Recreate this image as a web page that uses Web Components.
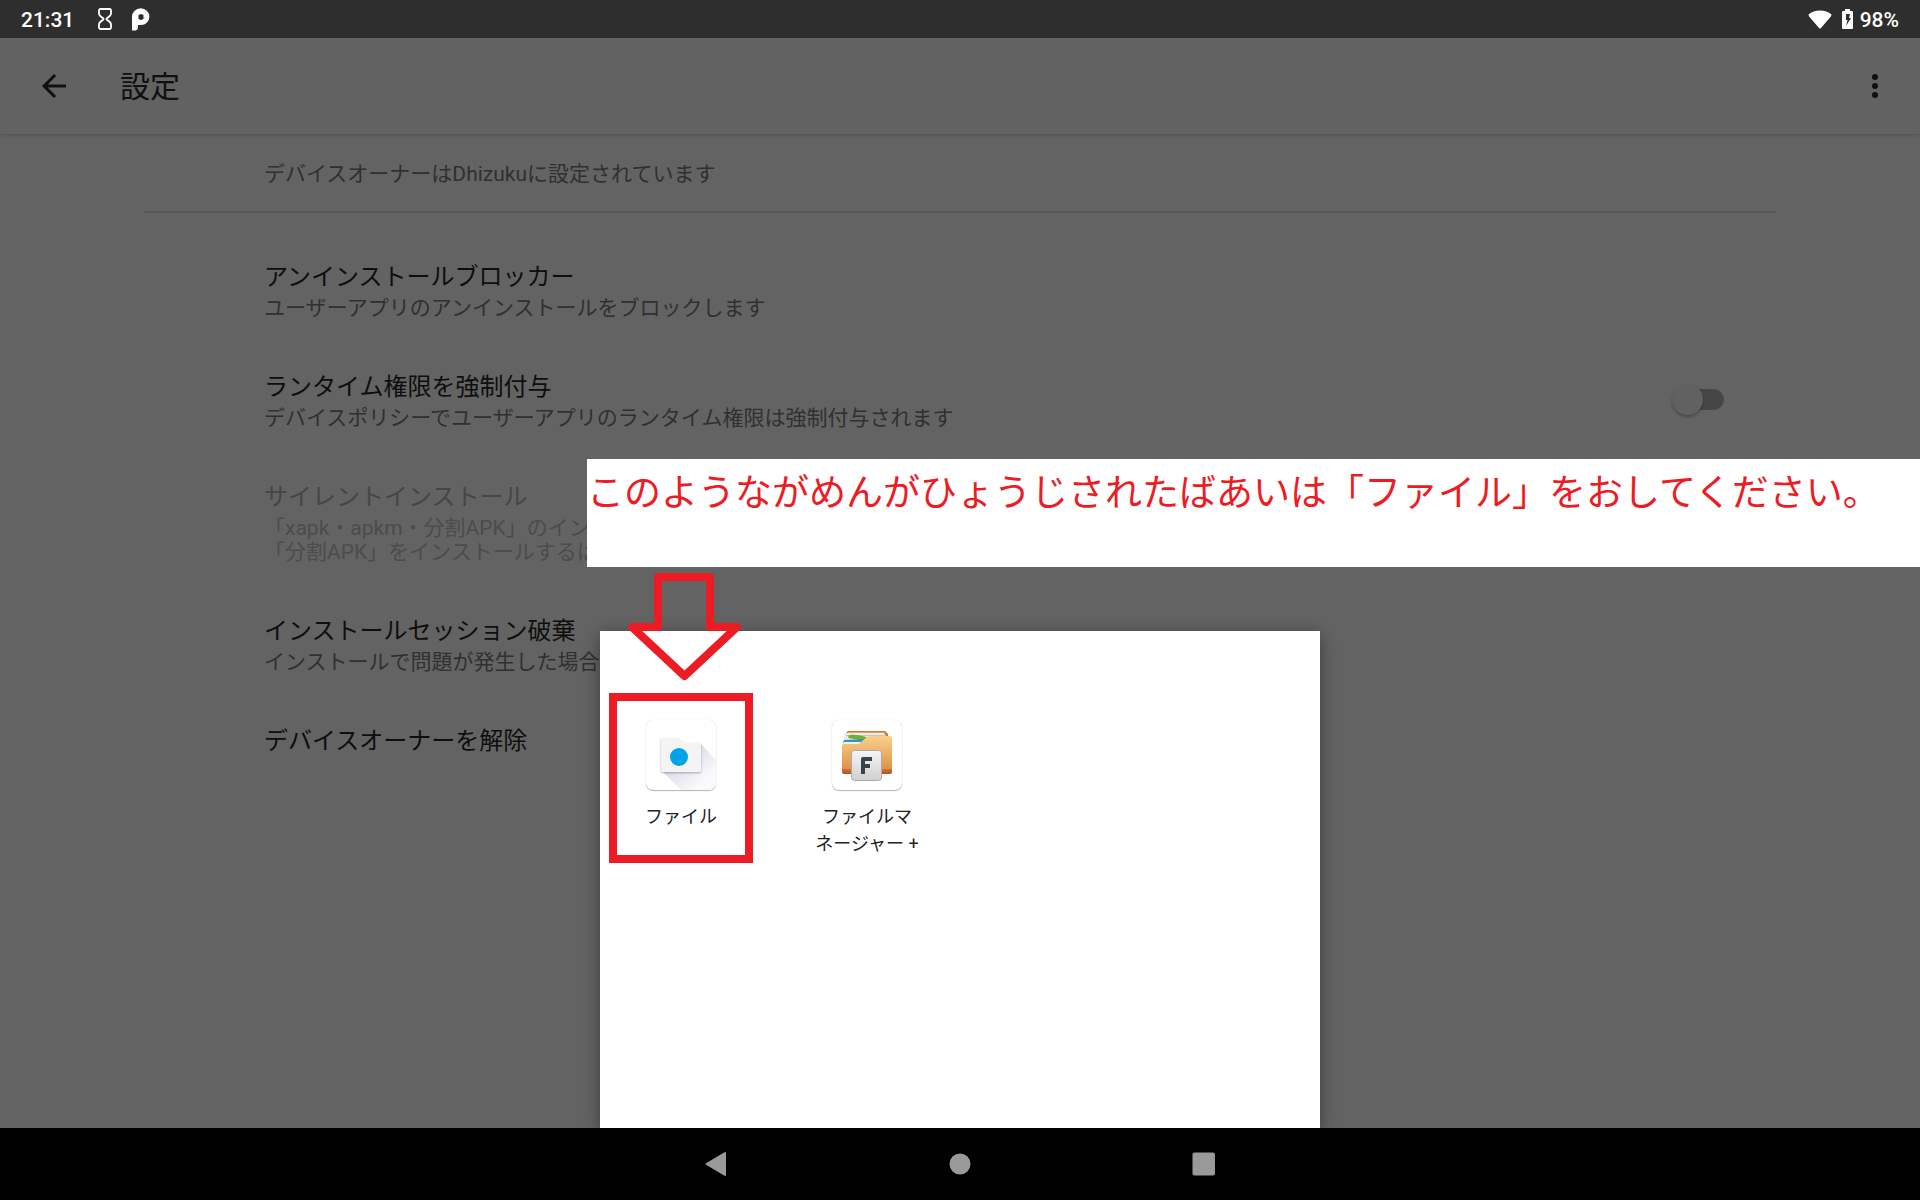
<!DOCTYPE html>
<html lang="ja">
<head>
<meta charset="utf-8">
<meta name="viewport" content="width=device-width, initial-scale=1">
<title>設定</title>
<style>
  html, body { margin: 0; min-height: 100%; }
  body { background: #636363; font-family: Roboto, "Noto Sans CJK JP", sans-serif; }
</style>
</head>
<body>
<device-screen></device-screen>
<script>
const define = (name, html) => {
  const tpl = document.createElement('template');
  tpl.innerHTML = '<style>*{box-sizing:border-box}button{appearance:none;border:0;background:none;padding:0;margin:0;font:inherit;color:inherit;cursor:pointer}svg{display:block}</style>' + html;
  customElements.define(name, class extends HTMLElement {
    constructor() {
      super();
      this.attachShadow({ mode: 'open' }).append(tpl.content.cloneNode(true));
    }
  });
};

define('status-bar', `
<style>
:host { display: flex; justify-content: space-between; align-items: center; height: 38px; padding: 0 21px; background: #2e2e2e; color: #fff; font-size: 21px; font-weight: 500; line-height: 36px; }
div { display: flex; align-items: center; }
time, span { padding-top: 2px; }
.left svg:first-of-type { margin-left: 24px; }
.left svg:last-of-type { margin-left: 20px; }
.right svg:first-of-type { margin-right: 10px; }
.right svg:last-of-type { margin-right: 7px; }
</style>
<div class="left"><time>21:31</time>
<svg width="14" height="22" viewBox="0 0 14 22" fill="none" stroke="#fff" stroke-width="1.8" stroke-linejoin="round"><path d="M2 1H12L13 2V5.500Q13 7 11.500 8.200L8.600 10.500V11.500L11.500 13.800Q13 15 13 16.500V20L12 21H2L1 20V16.500Q1 15 2.500 13.800L5.400 11.500V10.500L2.500 8.200Q1 7 1 5.500V2Z"/></svg>
<svg width="18" height="23" viewBox="0 0 18 23"><path fill="#fff" fill-rule="evenodd" d="M0 22V9A8.700 8.700 0 0 1 17.400 9A8.300 8.300 0 0 1 9 17H6V19Q6 22 3.500 22.500H1Q0 22.500 0 22ZM9 6L6.500 7V11L9 12L11.500 11V7Z"/></svg></div>
<div class="right">
<svg width="24" height="19" viewBox="0 0 24 19"><path fill="#fff" d="M.5 4.500Q5 .5 12 .5T23.500 4.500Q23.500 6 22 7.500L13 18Q12 19 11 18L2 7.500Q.5 6 .5 4.500Z"/></svg>
<svg width="11" height="20" viewBox="0 0 11 20"><path fill="#fff" fill-rule="evenodd" d="M3 0H8V2H10Q11 2 11 3V19Q11 20 10 20H1Q0 20 0 19V3Q0 2 1 2H3ZM4 5V11H5.500L4 17L9 9H7L8 5Z"/></svg>
<span>98%</span></div>`);

define('app-bar', `
<style>
:host { display: flex; align-items: center; height: 96px; padding: 0 27px 0 36px; background: #626262; color: #101010; box-shadow: 0 1px 3px rgba(0,0,0,.2); position: relative; }
h1 { flex: 1; margin: 0 0 0 48px; padding-top: 2px; font-size: 30px; line-height: 44px; font-weight: 400; }
</style>
<button aria-label="戻る"><svg width="36" height="36" viewBox="0 0 24 24"><path fill="#101010" d="M20 11H7.830l5.590-5.590L12 4l-8 8 8 8 1.410-1.410L7.830 13H20v-2z"/></svg></button>
<h1><slot></slot></h1>
<button aria-label="その他"><svg width="36" height="36" viewBox="0 0 24 24" fill="#101010"><circle cx="12" cy="6" r="2"/><circle cx="12" cy="12" r="2"/><circle cx="12" cy="18" r="2"/></svg></button>`);

define('owner-note', `
<style>
:host { display: block; margin: 0 144px; padding: 28px 120px 25px; border-bottom: 2px solid #565656; color: #303030; font-size: 21px; line-height: 24px; }
</style><slot></slot>`);

define('setting-row', `
<style>
:host { display: flex; align-items: center; justify-content: space-between; padding: 25px 196px 23px 264px; color: #0e0e0e; --sub: #303030; }
:host([disabled]) { color: #464646; --sub: #4c4c4c; }
h2 { margin: 0; font-size: 24px; line-height: 38px; font-weight: 400; }
p { margin: 0; font-size: 21px; line-height: 24px; color: var(--sub); }
</style>
<div><h2><slot></slot></h2><p><slot name="summary"></slot></p></div>
<slot name="control"></slot>`);

define('toggle-switch', `
<style>
:host { display: block; }
label { display: flex; align-items: center; width: 52px; height: 32px; }
input { appearance: none; display: flex; align-items: center; width: 52px; height: 21px; margin: 0; background: linear-gradient(#464646, #464646) right center / 36px 21px no-repeat; border-radius: 0 11px 11px 0; }
input::before { content: ""; width: 31px; height: 31px; flex: none; border-radius: 50%; background: #616161; box-shadow: 0 2px 3px rgba(0,0,0,.25); }
</style>
<label><input type="checkbox" role="switch" aria-label="ランタイム権限を強制付与"></label>`);

define('app-tile', `
<style>
:host { display: block; }
button { display: flex; flex-direction: column; align-items: center; gap: 13px; width: 106px; color: #222; font-size: 18px; line-height: 27px; }
.tile { display: block; width: 70px; height: 70px; border-radius: 7px; background: #fff; box-shadow: 0 1px 1px rgba(0,0,0,.28), 0 0 1px rgba(0,0,0,.18); overflow: hidden; }
</style>
<button><span class="tile"><slot name="icon"></slot></span><span><slot></slot></span></button>`);

define('files-icon', `
<style>:host { display: block; }</style>
<svg width="70" height="70" viewBox="0 0 70 70">
<defs><linearGradient id="s" x1="0" y1="0" x2="1" y2="1"><stop offset=".35" stop-color="#dcdcea"/><stop offset=".8" stop-color="#fafafd"/></linearGradient>
<filter id="b" x="-20%" y="-20%" width="140%" height="150%"><feDropShadow dx="0" dy="1" stdDeviation="1" flood-opacity=".3"/></filter></defs>
<path fill="url(#s)" d="M15 50L35 70H70V40L55 24Z"/>
<path filter="url(#b)" fill="#f4f4f4" d="M15 20Q15 18 17 18H31Q33 18 35 20L38 23H53Q55 23 55 25V50Q55 52 53 52H17Q15 52 15 50Z"/>
<circle cx="33" cy="37" r="9" fill="#00a2e8"/></svg>`);

define('manager-icon', `
<style>:host { display: block; }</style>
<svg width="70" height="70" viewBox="0 0 70 70">
<defs><linearGradient id="f" x1="0" y1="0" x2="0" y2="1"><stop offset="0" stop-color="#fbd08c"/><stop offset="1" stop-color="#dc9146"/></linearGradient>
<linearGradient id="c" x1="0" y1="0" x2="0" y2="1"><stop offset="0" stop-color="#f5f5f5"/><stop offset="1" stop-color="#cfcfcf"/></linearGradient>
<linearGradient id="d" x1="0" y1="0" x2="0" y2="1"><stop offset="0" stop-color="#cf7636"/><stop offset="1" stop-color="#b4501c"/></linearGradient></defs>
<path fill="#c97a32" d="M14 13L16 11H53L56 14V30H14Z"/><path fill="#eda24b" d="M16 12H53V13H16Z"/>
<path fill="#e9ecea" d="M12 14Q12 13 14 13H52L54 16V34H11Z"/><path fill="#c0c8c9" d="M14 15H53V16H14Z"/>
<path fill="#74ad36" d="M17 15Q27 14 37 18L34 21L16 18Z"/>
<path fill="#3098b8" d="M12 20L33 19L29 23H11Z"/><path fill="#edf2f0" d="M12 22H30L27 25H11Z"/>
<path fill="url(#f)" d="M10 26Q10 24 12 24H26Q28 24 29 22L35 17Q36 16 38 16H58Q60 16 60 18V50H10Z"/>
<path fill="url(#d)" d="M10 49H60V52Q60 54 58 54H12Q10 54 10 52Z"/>
<rect x="19.500" y="30.500" width="30" height="30" rx="3" fill="url(#c)" stroke="#aaa" stroke-width="1"/>
<path fill="none" stroke="#36434a" stroke-width="4" stroke-linejoin="round" d="M31 54V39H40M31 46H38"/></svg>`);

define('chooser-dialog', `
<style>
:host { display: block; width: 720px; height: 497px; padding: 89px 28px 0; background: #fff; box-shadow: 0 4px 16px rgba(0,0,0,.4); }
.grid { display: grid; grid-template-columns: repeat(4, 106px); justify-content: space-between; align-items: start; }
</style>
<div class="grid"><slot></slot></div>`);

define('note-banner', `
<style>
:host { display: block; height: 108px; padding: 4px 0 0; background: #fff; color: #ed1c24; font-size: 37px; line-height: 54px; white-space: nowrap; overflow: hidden; font-family: "Noto Sans CJK JP", sans-serif; }
</style><slot></slot>`);

define('nav-bar', `
<style>
:host { display: flex; justify-content: center; height: 72px; background: #000; }
button { width: 244px; display: flex; align-items: center; justify-content: center; }
</style>
<button aria-label="戻る"><svg width="24" height="26" viewBox="0 0 24 26"><path fill="#999" stroke="#999" stroke-width="2" stroke-linejoin="round" d="M2.500 13L21 2V24Z"/></svg></button>
<button aria-label="ホーム"><svg width="22" height="22" viewBox="0 0 22 22"><circle cx="11" cy="11" r="10.500" fill="#999"/></svg></button>
<button aria-label="最近"><svg width="24" height="24" viewBox="0 0 24 24"><rect x=".5" y=".5" width="22.500" height="23" rx="2" fill="#999"/></svg></button>`);

define('device-screen', `
<style>
:host { display: flex; flex-direction: column; min-height: 100vh; position: relative; overflow: hidden; }
main { flex: 1; padding-bottom: 24px; }
.list { padding-top: 20px; }
.sheet { position: absolute; inset: 0 0 72px; display: flex; justify-content: center; align-items: flex-end; }
note-banner { position: absolute; left: 587px; right: 0; top: 459px; }
.arrow { position: absolute; left: 624px; top: 570px; pointer-events: none; }
.mark { position: absolute; left: 609px; top: 693px; width: 144px; height: 170px; border: 8px solid #ed1c24; pointer-events: none; }
</style>
<status-bar></status-bar>
<app-bar>設定</app-bar>
<main>
<owner-note>デバイスオーナーはDhizukuに設定されています</owner-note>
<div class="list">
<setting-row>アンインストールブロッカー<span slot="summary">ユーザーアプリのアンインストールをブロックします</span></setting-row>
<setting-row>ランタイム権限を強制付与<span slot="summary">デバイスポリシーでユーザーアプリのランタイム権限は強制付与されます</span><toggle-switch slot="control"></toggle-switch></setting-row>
<setting-row disabled>サイレントインストール<span slot="summary">「xapk・apkm・分割APK」のイン<br>「分割APK」をインストールするは</span></setting-row>
<setting-row>インストールセッション破棄<span slot="summary">インストールで問題が発生した場合</span></setting-row>
<setting-row>デバイスオーナーを解除</setting-row>
</div>
</main>
<nav-bar></nav-bar>
<div class="sheet"><chooser-dialog>
<app-tile><files-icon slot="icon"></files-icon>ファイル</app-tile>
<app-tile><manager-icon slot="icon"></manager-icon>ファイルマ<br>ネージャー +</app-tile>
</chooser-dialog></div>
<note-banner>このようながめんがひょうじされたばあいは「ファイル」をおしてください。</note-banner>
<svg class="arrow" width="122" height="116" viewBox="624 570 122 116"><path fill="none" stroke="#ed1c24" stroke-width="8" stroke-linejoin="round" d="M658 577H710V627H737L684.500 676L632 627H658Z"/></svg>
<div class="mark"></div>`);
</script>
</body>
</html>
